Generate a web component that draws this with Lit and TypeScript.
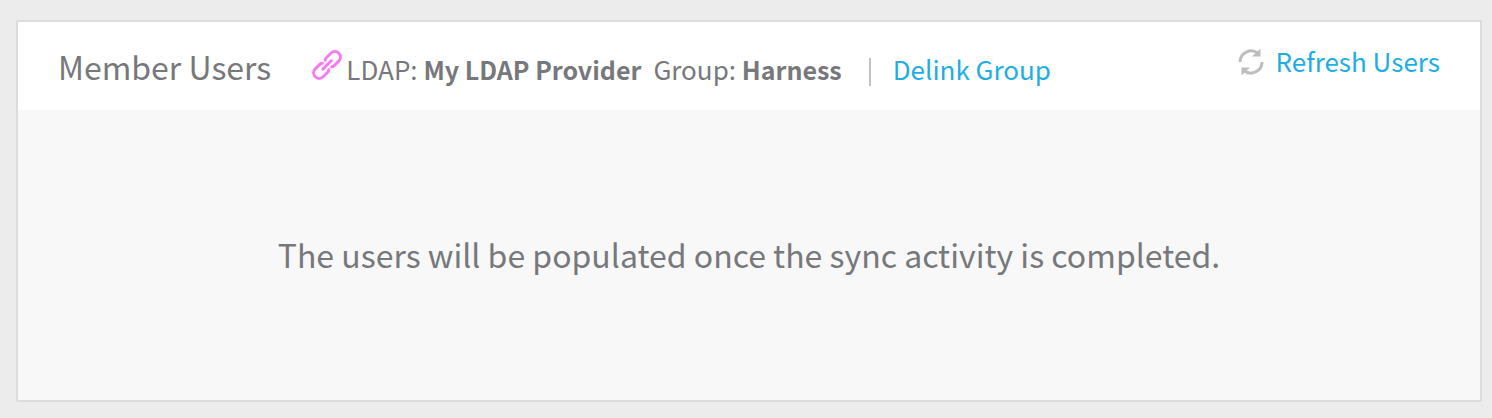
import { LitElement, html, css } from "lit";
import { customElement, property } from "lit/decorators.js";

@customElement("app-root")
export class AppRoot extends LitElement {
  @property() provider = "My LDAP Provider";
  @property() group = "Harness";

  static styles = css`
    :host {
      display: block;
      box-sizing: border-box;
      min-height: 100vh;
      padding: 20px 10px 16px 16px;
      background: #ececec;
      color: #77787b;
      font-family: "Noto Sans CJK SC", "Noto Sans", sans-serif;
      font-size: 26px;
      line-height: 36px;
    }
    b {
      font-size: 25px;
    }
    .panel {
      border: 2px solid #dcdcdc;
      border-radius: 2px;
      background: #f8f8f8;
    }
    .header {
      display: flex;
      align-items: center;
      min-height: 88px;
      padding: 0 40px;
      box-sizing: border-box;
      background: #fff;
    }
    .title {
      margin: 0;
      font-size: 32px;
      line-height: 48px;
      font-weight: 400;
    }
    .source {
      display: flex;
      align-items: center;
      margin-left: 41px;
      padding-top: 6px;
      white-space: pre;
    }
    .link-icon {
      width: 30px;
      height: 30px;
      margin: 0 4px 8px 0;
    }
    .group {
      margin-left: 12px;
    }
    .divider {
      width: 2px;
      height: 28px;
      margin: 6px 22px 0 27px;
      background: #c2c3c4;
    }
    .action {
      display: flex;
      align-items: center;
      gap: 12px;
      padding: 0;
      border: 0;
      background: none;
      color: #1eaee3;
      font: inherit;
      cursor: pointer;
    }
    .refresh {
      margin-left: auto;
      padding-bottom: 10px;
    }
    .refresh-icon {
      width: 26px;
      height: 30px;
    }
    .empty {
      display: flex;
      align-items: center;
      justify-content: center;
      min-height: 288px;
      margin: 0;
      padding-bottom: 2px;
      font-size: 32px;
      line-height: 48px;
    }
  `;

  render() {
    return html`
      <section class="panel" aria-labelledby="title">
        <header class="header">
          <h2 class="title" id="title">Member Users</h2>
          <div class="source">
            <svg class="link-icon" viewBox="0 0 30 30" aria-hidden="true">
              <g transform="translate(15 15) rotate(-45)" fill="none" stroke="#f77af3" stroke-width="3" stroke-linecap="round">
                <path d="M-6 0H6" />
                <path d="M2 -4.600Q3 -5.600 5 -5.600H11A5.600 5.600 0 0 1 11 5.600H5Q3 5.600 2 4.600" />
                <path d="M-2 -4.600Q-3 -5.600 -5 -5.600H-11A5.600 5.600 0 0 0 -11 5.600H-5Q-3 5.600 -2 4.600" />
              </g>
            </svg>
            <span>LDAP: <b>${this.provider}</b></span>
            <span class="group">Group: <b>${this.group}</b></span>
            <span class="divider"></span>
            <button class="action" type="button">Delink Group</button>
          </div>
          <button class="action refresh" type="button">
            <svg class="refresh-icon" viewBox="0 -2 26 30" aria-hidden="true">
              <g fill="none" stroke="#bcbdbf" stroke-width="3">
                <path d="M2 14A11 11 0 0 1 20 5.500" />
                <path d="M24 14A11 11 0 0 1 6 22.500" />
              </g>
              <path fill="#bcbdbf" d="M22.500 .500V8.500H14ZM3.500 27.500V19.500H12Z" />
            </svg>
            Refresh Users
          </button>
        </header>
        <p class="empty">The users will be populated once the sync activity is completed.</p>
      </section>
    `;
  }
}
